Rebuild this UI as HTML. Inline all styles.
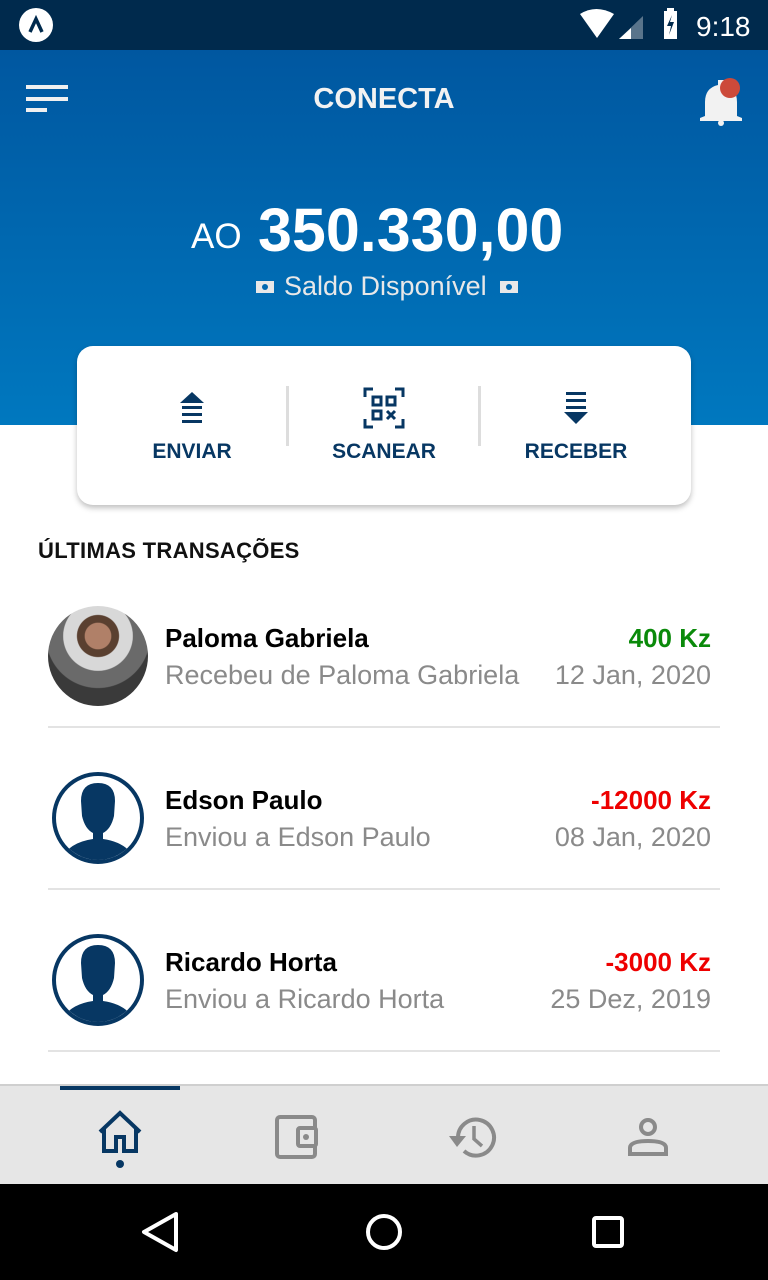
<!DOCTYPE html>
<html><head><meta charset="utf-8"><style>
*{margin:0;padding:0;box-sizing:border-box}
body{width:768px;height:1280px;position:relative;overflow:hidden;background:#fff;font-family:"Liberation Sans",sans-serif}
.a{position:absolute}
.name{font-size:26px;font-weight:bold;color:#000}
.sub{font-size:27px;color:#8a8a8a}
.amt{font-size:26px;font-weight:bold;right:57px;text-align:right}
.date{font-size:27px;color:#8a8a8a;right:57px;text-align:right}
.div{left:48px;width:672px;height:2px;background:#e3e3e3}
.lbl{font-size:21px;font-weight:bold;color:#073763;text-align:center;width:200px}
</style></head><body>
<div class="a" style="left:0;top:0;width:768px;height:50px;background:#002a4d"></div>
<div class="a" style="left:19px;top:8px;width:34px;height:34px;border-radius:50%;background:#fff"></div>
<svg class="a" style="left:19px;top:8px" width="34" height="34"><path d="M11 24 L17 11 L23 24" stroke="#002a4d" stroke-width="3.5" fill="none"/></svg>
<svg class="a" style="left:578px;top:6px" width="190" height="38">
<path d="M2 8 Q18 -2 36 8 L19 32 Z" fill="#fff"/>
<path d="M41 33 L65 10 L65 33 Z" fill="#fff" opacity=".35"/><path d="M41 33 L53 22 L53 33 Z" fill="#fff"/>
<rect x="86" y="5" width="13" height="28" fill="#fff"/><rect x="89" y="2" width="7" height="4" fill="#fff"/>
<path d="M94 9 L89 20 L93 20 L91 29 L96 16 L92 16 Z" fill="#002a4d"/>
<text x="118" y="30" font-family="Liberation Sans" font-size="28" fill="#fff">9:18</text></svg>
<div class="a" style="left:0;top:50px;width:768px;height:375px;background:linear-gradient(#0057a0,#0078bf)"></div>
<div class="a" style="left:26px;top:85px;width:42px;height:4px;background:#f0f0f0"></div>
<div class="a" style="left:26px;top:97px;width:42px;height:4px;background:#f0f0f0"></div>
<div class="a" style="left:26px;top:108px;width:21px;height:4px;background:#f0f0f0"></div>
<div class="a" style="left:0;top:83px;width:768px;text-align:center;color:#f2f2f2;font-size:29px;font-weight:bold">CONECTA</div>
<svg class="a" style="left:696px;top:74px" width="52" height="52"><path d="M9 42 L9 28 Q9 14 22 11 L22 6 L28 6 L28 11 Q41 14 41 28 L41 42 L46 44 L46 47 L4 47 L4 44 Z" fill="#f2f2f2"/><circle cx="25" cy="49" r="3" fill="#f2f2f2"/><circle cx="34" cy="14" r="10" fill="#cc4a3a"/></svg>
<div class="a" style="left:191px;top:217px;font-size:35px;color:#fff">AO</div>
<div class="a" style="left:258px;top:195px;font-size:61px;font-weight:bold;color:#fff">350.330,00</div>
<div class="a" style="left:284px;top:271px;font-size:27px;color:#e8e8e8">Saldo Disponível</div>
<svg class="a" style="left:256px;top:281px" width="20" height="14"><rect width="18" height="12" fill="#e8e8e8"/><circle cx="9" cy="6" r="3" fill="#0068b0"/></svg>
<svg class="a" style="left:500px;top:281px" width="20" height="14"><rect width="18" height="12" fill="#e8e8e8"/><circle cx="9" cy="6" r="3" fill="#0068b0"/></svg>
<div class="a" style="left:77px;top:346px;width:614px;height:159px;background:#fff;border-radius:16px;box-shadow:0 3px 6px rgba(0,0,0,.25)"></div>
<div class="a" style="left:286px;top:386px;width:3px;height:60px;background:#ddd"></div>
<div class="a" style="left:478px;top:386px;width:3px;height:60px;background:#ddd"></div>
<svg class="a" style="left:178px;top:391px" width="28" height="34" fill="#073763"><path d="M2 12 L14 1 L26 12 Z"/><rect x="4" y="15" width="20" height="3"/><rect x="4" y="22" width="20" height="3"/><rect x="4" y="29" width="20" height="3"/></svg>
<svg class="a" style="left:363px;top:387px" width="42" height="42" fill="none" stroke="#073763" stroke-width="3"><path d="M2 10 V2 H10 M32 2 H40 V10 M40 32 V40 H32 M10 40 H2 V32"/><rect x="10" y="10" width="8" height="8"/><rect x="24" y="10" width="8" height="8"/><rect x="10" y="24" width="8" height="8"/><path d="M24 24 L32 32 M32 24 L24 32" stroke-width="3"/></svg>
<svg class="a" style="left:562px;top:391px" width="28" height="34" fill="#073763"><rect x="4" y="1" width="20" height="3"/><rect x="4" y="8" width="20" height="3"/><rect x="4" y="15" width="20" height="3"/><path d="M2 21 L26 21 L14 33 Z"/></svg>
<div class="a lbl" style="left:92px;top:440px">ENVIAR</div>
<div class="a lbl" style="left:284px;top:440px">SCANEAR</div>
<div class="a lbl" style="left:476px;top:440px">RECEBER</div>
<div class="a" style="left:38px;top:538px;font-size:22px;font-weight:bold;color:#111;letter-spacing:.3px">ÚLTIMAS TRANSAÇÕES</div>

<div class="a" style="left:48px;top:606px;width:100px;height:100px;border-radius:50%;background:radial-gradient(circle at 50% 30%,#b08068 0 15%,#5a4030 16% 24%,#d8d8d8 25% 40%,#6a6a6a 41% 60%,#3a3a3a 61%)"></div>
<div class="a name" style="left:165px;top:623px">Paloma Gabriela</div>
<div class="a sub" style="left:165px;top:660px">Recebeu de Paloma Gabriela</div>
<div class="a amt" style="top:623px;color:#0a8a0a">400 Kz</div>
<div class="a date" style="top:660px">12 Jan, 2020</div>
<div class="a div" style="top:726px"></div>

<svg class="a" style="left:51px;top:771px" width="94" height="94"><defs><clipPath id="c1"><circle cx="47" cy="47" r="42"/></clipPath></defs><circle cx="47" cy="47" r="44" fill="#fff" stroke="#073763" stroke-width="4"/><g clip-path="url(#c1)" fill="#073763"><path d="M30 30 Q30 12 47 12 Q64 12 64 30 L63 45 Q60 58 52 62 L52 68 Q80 72 86 94 L8 94 Q14 72 42 68 L42 62 Q34 58 31 45 Z"/></g></svg>
<div class="a name" style="left:165px;top:785px">Edson Paulo</div>
<div class="a sub" style="left:165px;top:822px">Enviou a Edson Paulo</div>
<div class="a amt" style="top:785px;color:#ee0000">-12000 Kz</div>
<div class="a date" style="top:822px">08 Jan, 2020</div>
<div class="a div" style="top:888px"></div>

<svg class="a" style="left:51px;top:933px" width="94" height="94"><defs><clipPath id="c2"><circle cx="47" cy="47" r="42"/></clipPath></defs><circle cx="47" cy="47" r="44" fill="#fff" stroke="#073763" stroke-width="4"/><g clip-path="url(#c2)" fill="#073763"><path d="M30 30 Q30 12 47 12 Q64 12 64 30 L63 45 Q60 58 52 62 L52 68 Q80 72 86 94 L8 94 Q14 72 42 68 L42 62 Q34 58 31 45 Z"/></g></svg>
<div class="a name" style="left:165px;top:947px">Ricardo Horta</div>
<div class="a sub" style="left:165px;top:984px">Enviou a Ricardo Horta</div>
<div class="a amt" style="top:947px;color:#ee0000">-3000 Kz</div>
<div class="a date" style="top:984px">25 Dez, 2019</div>
<div class="a div" style="top:1050px"></div>

<div class="a" style="left:0;top:1084px;width:768px;height:100px;background:#e6e6e6;border-top:2px solid #cfcfcf"></div>
<div class="a" style="left:60px;top:1086px;width:120px;height:4px;background:#073763"></div>
<svg class="a" style="left:96px;top:1110px" width="48" height="62"><path d="M4 22 L24 3 L44 22 M8 19 V41 H20 V27 H28 V41 H40 V19" fill="none" stroke="#073763" stroke-width="4"/><circle cx="24" cy="54" r="4" fill="#073763"/></svg>
<svg class="a" style="left:274px;top:1114px" width="48" height="48"><rect x="3" y="3" width="38" height="40" rx="3" fill="none" stroke="#8a8a8a" stroke-width="4"/><rect x="24" y="14" width="18" height="18" rx="2" fill="#e6e6e6" stroke="#8a8a8a" stroke-width="4"/><circle cx="32" cy="23" r="3" fill="#8a8a8a"/></svg>
<svg class="a" style="left:446px;top:1114px" width="52" height="48"><path d="M12 24 A18 18 0 1 1 18 37" fill="none" stroke="#8a8a8a" stroke-width="4"/><path d="M3 22 L20 22 L11 33 Z" fill="#8a8a8a"/><path d="M28 12 V25 L36 32" fill="none" stroke="#8a8a8a" stroke-width="3.5"/></svg>
<svg class="a" style="left:626px;top:1116px" width="44" height="44"><circle cx="22" cy="11" r="7" fill="none" stroke="#8a8a8a" stroke-width="4"/><path d="M4 38 V32 Q4 25 22 25 Q40 25 40 32 V38 Z" fill="none" stroke="#8a8a8a" stroke-width="4"/></svg>
<div class="a" style="left:0;top:1184px;width:768px;height:96px;background:#000"></div>
<svg class="a" style="left:0;top:1184px" width="768" height="96"><path d="M176 30 L144 48 L176 66 Z" fill="none" stroke="#fff" stroke-width="4" stroke-linejoin="round"/><circle cx="384" cy="48" r="16" fill="none" stroke="#fff" stroke-width="4"/><rect x="594" y="34" width="28" height="28" rx="2" fill="none" stroke="#fff" stroke-width="4"/></svg>
</body></html>
